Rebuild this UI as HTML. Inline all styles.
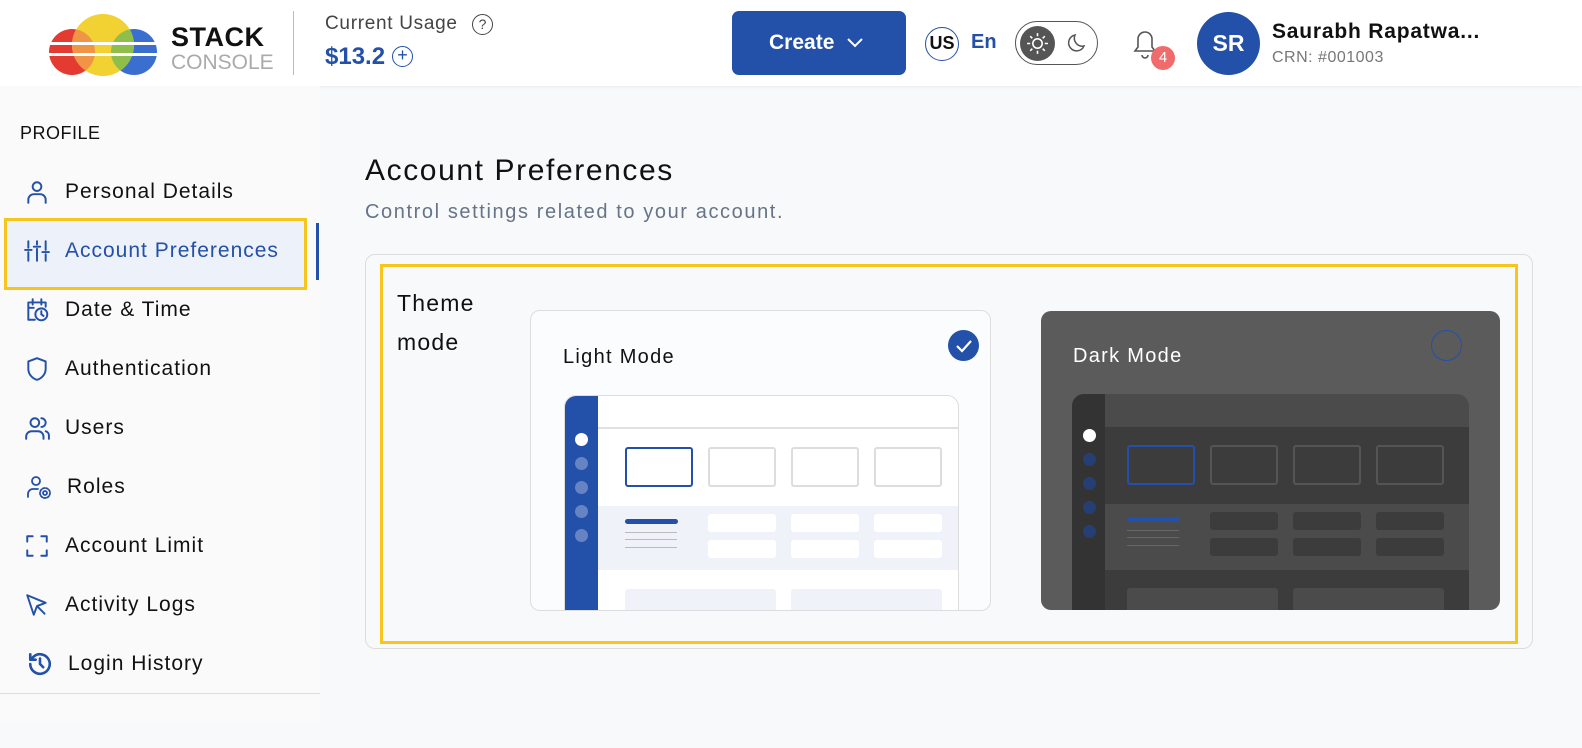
<!DOCTYPE html>
<html><head><meta charset="utf-8"><style>
*{box-sizing:border-box;margin:0;padding:0}
body{width:1582px;height:748px;overflow:hidden;background:#f8f9fb;font-family:"Liberation Sans",sans-serif;position:relative;color:#111}
.a{position:absolute}
.hdr{left:0;top:0;width:1582px;height:86px;background:#fff;box-shadow:0 1px 3px rgba(0,0,0,.06)}
.side{left:0;top:86px;width:320px;height:636px;background:#fafafa}
.nav{position:absolute;left:24px;font-size:21px;letter-spacing:1px;color:#111;display:flex;align-items:center;white-space:nowrap}
.nav svg{width:26px;height:26px;margin-right:15px;fill:none;stroke:#2350a8;stroke-width:1.8;stroke-linecap:round;stroke-linejoin:round}
.box{position:absolute;border-radius:3px}
</style></head><body>
<div class="a hdr"></div>
<!-- logo -->
<svg class="a" style="left:48px;top:12px" width="112" height="64" viewBox="0 0 112 64">
<defs><clipPath id="cr"><circle cx="24" cy="40" r="23"/></clipPath><clipPath id="cb"><circle cx="86" cy="40" r="23"/></clipPath></defs>
<circle cx="24" cy="40" r="23" fill="#e33b32"/>
<circle cx="86" cy="40" r="23" fill="#3a6fcf"/>
<circle cx="55" cy="33" r="31" fill="#f2d133"/>
<circle cx="55" cy="33" r="31" fill="#ef9545" clip-path="url(#cr)"/>
<circle cx="55" cy="33" r="31" fill="#8fbf4a" clip-path="url(#cb)"/>
<rect x="0" y="30" width="112" height="3" fill="#fff"/>
<rect x="0" y="41" width="112" height="3" fill="#fff"/>
</svg>
<div class="a" style="left:171px;top:22px;font-size:27px;font-weight:bold;letter-spacing:.5px;color:#111">STACK</div>
<div class="a" style="left:171px;top:51px;font-size:21px;color:#aaa">CONSOLE</div>
<div class="a" style="left:293px;top:11px;width:1px;height:64px;background:#bbb"></div>
<div class="a" style="left:325px;top:13px;font-size:19px;letter-spacing:.7px;color:#444">Current Usage</div>
<div class="a" style="left:472px;top:14px;width:21px;height:21px;border:1.5px solid #444;border-radius:50%;font-size:14px;text-align:center;line-height:18px;color:#444">?</div>
<div class="a" style="left:325px;top:43px;font-size:24px;font-weight:bold;color:#2350a8">$13.2</div>
<div class="a" style="left:392px;top:46px;width:21px;height:21px;border:1.5px solid #2350a8;border-radius:50%;font-size:18px;text-align:center;line-height:17px;color:#2350a8">+</div>
<!-- create -->
<div class="a" style="left:732px;top:11px;width:174px;height:64px;background:#2350a8;border-radius:7px;color:#fff;font-size:21px;font-weight:bold;line-height:64px;padding-left:37px">Create <svg width="18" height="12" style="margin-left:6px" viewBox="0 0 18 12"><path d="M2 2l7 7 7-7" stroke="#fff" stroke-width="2" fill="none"/></svg></div>
<div class="a" style="left:925px;top:27px;width:34px;height:34px;border:1.5px solid #2350a8;border-radius:50%;font-size:18px;font-weight:bold;text-align:center;line-height:31px">US</div>
<div class="a" style="left:971px;top:31px;font-size:20px;font-weight:bold;color:#2350a8">En</div>
<div class="a" style="left:1015px;top:21px;width:83px;height:44px;border:1.5px solid #555;border-radius:22px"></div>
<div class="a" style="left:1020px;top:26px;width:35px;height:35px;background:#555;border-radius:50%"></div>
<svg class="a" style="left:1025px;top:31px" width="25" height="25" viewBox="0 0 24 24" fill="none" stroke="#fff" stroke-width="1.5"><circle cx="12" cy="12" r="4.5"/><path d="M12 2v3M12 19v3M2 12h3M19 12h3M5 5l2 2M17 17l2 2M5 19l2-2M17 7l2-2"/></svg>
<svg class="a" style="left:1065px;top:31px" width="24" height="24" viewBox="0 0 24 24" fill="none" stroke="#555" stroke-width="1.5"><path d="M19 15A8 8 0 0 1 10 4a8 8 0 1 0 9 11z"/></svg>
<svg class="a" style="left:1130px;top:26px" width="30" height="34" viewBox="0 0 30 34" fill="none" stroke="#555" stroke-width="1.6"><path d="M5 25h20l-3-4V13a7 7 0 0 0-14 0v8z"/><path d="M12 29a3 3 0 0 0 6 0"/></svg>
<div class="a" style="left:1151px;top:46px;width:24px;height:24px;background:#f06c6c;border-radius:50%;color:#fff;font-size:15px;text-align:center;line-height:24px">4</div>
<div class="a" style="left:1197px;top:12px;width:63px;height:63px;background:#2350a8;border-radius:50%;color:#fff;font-size:23px;font-weight:bold;text-align:center;line-height:63px">SR</div>
<div class="a" style="left:1272px;top:20px;font-size:21px;font-weight:bold;letter-spacing:.8px">Saurabh Rapatwa...</div>
<div class="a" style="left:1272px;top:49px;font-size:16px;color:#777;letter-spacing:.5px">CRN: #001003</div>
<!-- sidebar -->
<div class="a side"></div>
<div class="a" style="left:0;top:693px;width:320px;height:1px;background:#ddd"></div>
<div class="a" style="left:20px;top:123px;font-size:18px;color:#111;letter-spacing:.5px">PROFILE</div>
<div class="a" style="left:4px;top:218px;width:303px;height:72px;border:3px solid #f7c51b;background:#edf1f9"></div>
<div class="a" style="left:316px;top:223px;width:3px;height:57px;background:#2350a8"></div>
<div class="nav" style="top:179px"><svg viewBox="0 0 24 24"><circle cx="12" cy="7" r="4"/><path d="M4 22v-3a5 5 0 0 1 5-5h6a5 5 0 0 1 5 5v3"/></svg>Personal Details</div>
<div class="nav" style="top:238px;color:#2350a8"><svg viewBox="0 0 24 24"><path d="M4 3v6M4 13v8M12 3v3M12 10v11M20 3v8M20 15v6M1 11h6M9 8h6M17 13h6"/></svg>Account Preferences</div>
<div class="nav" style="top:297px"><svg viewBox="0 0 24 24"><path d="M10 21H4V5h16v4M4 10h5M8 2v5M16 2v5"/><circle cx="16" cy="16" r="5.5"/><path d="M16 13v3l2 1.5"/></svg>Date &amp; Time</div>
<div class="nav" style="top:356px"><svg viewBox="0 0 24 24"><path d="M12 2l8 3v7c0 5-4 9-8 10-4-1-8-5-8-10V5z"/></svg>Authentication</div>
<div class="nav" style="top:415px"><svg viewBox="0 0 24 24"><circle cx="10" cy="7" r="4"/><path d="M2 22v-2a5 5 0 0 1 5-5h6a5 5 0 0 1 5 5v2M16 3a4 4 0 0 1 0 8M20 15a4 4 0 0 1 3 4v3"/></svg>Users</div>
<div class="nav" style="top:474px"><svg viewBox="0 0 26 26" style="width:30px;margin-right:13px"><circle cx="10" cy="7" r="4"/><path d="M2 23v-3a5 5 0 0 1 5-5h5"/><circle cx="19" cy="19" r="2"/><circle cx="19" cy="19" r="5" stroke-dasharray="2 1.5"/></svg>Roles</div>
<div class="nav" style="top:533px"><svg viewBox="0 0 24 24"><path d="M3 8V3h5M16 3h5v5M21 16v5h-5M8 21H3v-5"/></svg>Account Limit</div>
<div class="nav" style="top:592px"><svg viewBox="0 0 24 24"><path d="M3 3l6 18 3-8 8-3z M12 13l7 7"/></svg>Activity Logs</div>
<div class="nav" style="top:651px;left:27px"><svg viewBox="0 0 24 24" style="stroke-width:2.4"><path d="M3 12a9 9 0 1 0 3-6.7L3 8M3 3v5h5M12 7v5l3 3"/></svg>Login History</div>
<!-- main -->
<div class="a" style="left:365px;top:154px;font-size:30px;letter-spacing:1.6px;color:#111">Account Preferences</div>
<div class="a" style="left:365px;top:201px;font-size:20px;letter-spacing:1.6px;color:#667487">Control settings related to your account.</div>
<div class="a" style="left:365px;top:254px;width:1168px;height:395px;border:1px solid #ddd;border-radius:10px"></div>
<div class="a" style="left:380px;top:264px;width:1138px;height:380px;border:3px solid #f7c51b"></div>
<div class="a" style="left:397px;top:284px;font-size:23px;letter-spacing:1.2px;line-height:39px">Theme<br>mode</div>
<!-- light card -->
<div class="a" style="left:530px;top:310px;width:461px;height:301px;border:1px solid #ddd;border-radius:10px;background:#fbfcfe;overflow:hidden">
 <div class="a" style="left:32px;top:35px;font-size:20px;letter-spacing:1.3px">Light Mode</div>
 <div class="a" style="left:417px;top:19px;width:31px;height:31px;border-radius:50%;background:#2350a8"></div>
 <svg class="a" style="left:423px;top:26px" width="20" height="18" viewBox="0 0 20 18"><path d="M3 9l5 5 9-10" stroke="#fff" stroke-width="2.2" fill="none"/></svg>
 <div class="a" style="left:33px;top:84px;width:395px;height:230px;border:1px solid #ddd;border-radius:12px 12px 0 0;background:#fff;overflow:hidden">
  <div class="a" style="left:0;top:0;width:33px;height:230px;background:#2350a8"></div>
  <div class="a" style="left:33px;top:31px;width:362px;height:2px;background:#e0e0e0"></div>
  <div class="a" style="left:33px;top:110px;width:362px;height:64px;background:#eff2f8"></div>
  <div class="a" style="left:10px;top:37px;width:13px;height:13px;border-radius:50%;background:#fff"></div>
  <div class="a" style="left:10px;top:61px;width:13px;height:13px;border-radius:50%;background:#6683c4"></div>
  <div class="a" style="left:10px;top:85px;width:13px;height:13px;border-radius:50%;background:#6683c4"></div>
  <div class="a" style="left:10px;top:109px;width:13px;height:13px;border-radius:50%;background:#6683c4"></div>
  <div class="a" style="left:10px;top:133px;width:13px;height:13px;border-radius:50%;background:#6683c4"></div>
  <div class="box" style="left:60px;top:51px;width:68px;height:40px;border:2px solid #2350a8"></div>
  <div class="box" style="left:143px;top:51px;width:68px;height:40px;border:2px solid #ddd"></div>
  <div class="box" style="left:226px;top:51px;width:68px;height:40px;border:2px solid #ddd"></div>
  <div class="box" style="left:309px;top:51px;width:68px;height:40px;border:2px solid #ddd"></div>
  <div class="box" style="left:60px;top:123px;width:53px;height:5px;background:#2350a8"></div>
  <div class="a" style="left:60px;top:136px;width:52px;height:1px;background:#bbb"></div>
  <div class="a" style="left:60px;top:143px;width:52px;height:1px;background:#bbb"></div>
  <div class="a" style="left:60px;top:151px;width:52px;height:1px;background:#bbb"></div>
  <div class="box" style="left:143px;top:118px;width:68px;height:18px;background:#fff"></div>
  <div class="box" style="left:226px;top:118px;width:68px;height:18px;background:#fff"></div>
  <div class="box" style="left:309px;top:118px;width:68px;height:18px;background:#fff"></div>
  <div class="box" style="left:143px;top:144px;width:68px;height:18px;background:#fff"></div>
  <div class="box" style="left:226px;top:144px;width:68px;height:18px;background:#fff"></div>
  <div class="box" style="left:309px;top:144px;width:68px;height:18px;background:#fff"></div>
  <div class="box" style="left:60px;top:193px;width:151px;height:40px;background:#eff2f8"></div>
  <div class="box" style="left:226px;top:193px;width:151px;height:40px;background:#eff2f8"></div>
 </div>
</div>
<!-- dark card -->
<div class="a" style="left:1041px;top:311px;width:459px;height:299px;border-radius:10px;background:#5b5b5b;overflow:hidden">
 <div class="a" style="left:32px;top:34px;font-size:20px;letter-spacing:1.3px;color:#fff">Dark Mode</div>
 <div class="a" style="left:390px;top:19px;width:31px;height:31px;border-radius:50%;border:1.5px solid #2350a8"></div>
 <div class="a" style="left:31px;top:83px;width:397px;height:230px;border-radius:12px 12px 0 0;background:#4b4b4b;overflow:hidden">
  <div class="a" style="left:0;top:0;width:33px;height:230px;background:#333"></div>
  <div class="a" style="left:33px;top:33px;width:364px;height:77px;background:#3c3c3c"></div>
  <div class="a" style="left:33px;top:176px;width:364px;height:60px;background:#3c3c3c"></div>
  <div class="a" style="left:11px;top:35px;width:13px;height:13px;border-radius:50%;background:#fff"></div>
  <div class="a" style="left:11px;top:59px;width:13px;height:13px;border-radius:50%;background:#263f73"></div>
  <div class="a" style="left:11px;top:83px;width:13px;height:13px;border-radius:50%;background:#263f73"></div>
  <div class="a" style="left:11px;top:107px;width:13px;height:13px;border-radius:50%;background:#263f73"></div>
  <div class="a" style="left:11px;top:131px;width:13px;height:13px;border-radius:50%;background:#263f73"></div>
  <div class="box" style="left:55px;top:51px;width:68px;height:40px;border:2px solid #2350a8"></div>
  <div class="box" style="left:138px;top:51px;width:68px;height:40px;border:2px solid #555"></div>
  <div class="box" style="left:221px;top:51px;width:68px;height:40px;border:2px solid #555"></div>
  <div class="box" style="left:304px;top:51px;width:68px;height:40px;border:2px solid #555"></div>
  <div class="box" style="left:55px;top:123px;width:53px;height:5px;background:#2350a8"></div>
  <div class="a" style="left:55px;top:136px;width:52px;height:1px;background:#666"></div>
  <div class="a" style="left:55px;top:143px;width:52px;height:1px;background:#666"></div>
  <div class="a" style="left:55px;top:151px;width:52px;height:1px;background:#666"></div>
  <div class="box" style="left:138px;top:118px;width:68px;height:18px;background:#3c3c3c"></div>
  <div class="box" style="left:221px;top:118px;width:68px;height:18px;background:#3c3c3c"></div>
  <div class="box" style="left:304px;top:118px;width:68px;height:18px;background:#3c3c3c"></div>
  <div class="box" style="left:138px;top:144px;width:68px;height:18px;background:#3c3c3c"></div>
  <div class="box" style="left:221px;top:144px;width:68px;height:18px;background:#3c3c3c"></div>
  <div class="box" style="left:304px;top:144px;width:68px;height:18px;background:#3c3c3c"></div>
  <div class="box" style="left:55px;top:194px;width:151px;height:40px;background:#4b4b4b"></div>
  <div class="box" style="left:221px;top:194px;width:151px;height:40px;background:#4b4b4b"></div>
 </div>
</div>
</body></html>
